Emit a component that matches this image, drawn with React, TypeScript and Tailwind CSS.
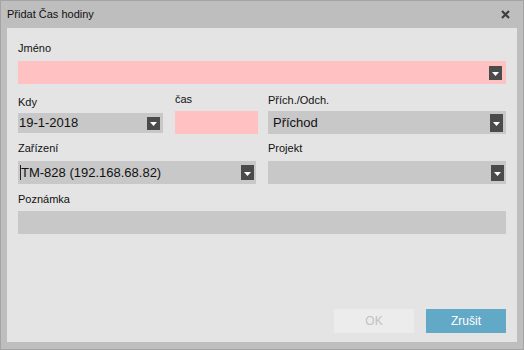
import React from 'react'

const font = { fontFamily: '"Liberation Sans", Arial, sans-serif' }

function Caret({ h = 'h-[13px]' }: { h?: string }) {
  return (
    <div className={`w-[13px] ${h} bg-[#4b4b4b] flex items-center justify-center shrink-0`}>
      <svg width="7" height="4" viewBox="0 0 7 4" className="mt-[2px]">
        <path d="M0 0H7L3.5 4Z" fill="#ffffff" />
      </svg>
    </div>
  )
}

function Label({ children, className = '' }: { children: React.ReactNode; className?: string }) {
  return <div className={`h-[14px] leading-[14px] text-[11px] text-[#111] ${className}`}>{children}</div>
}

export default function App() {
  return (
    <div style={font} className="w-[524px] h-[350px] bg-[#bebebe] border border-[#a4a4a4] flex flex-col">
      {/* title bar */}
      <div className="h-[27px] flex items-center justify-between pl-[6px] pr-[13px]">
        <span className="text-[11px] text-[#111]">Přidat Čas hodiny</span>
        <svg width="9" height="9" viewBox="0 0 9 9">
          <path d="M1 1L8 8M8 1L1 8" stroke="#3f3f3f" strokeWidth="2.2" />
        </svg>
      </div>

      <div className="mx-[6px] mb-[7px] flex-1 bg-[#e4e4e4] flex flex-col pl-[11px] pr-[11px] pt-[13px] pb-[9px]">
        {/* Jméno */}
        <Label>Jméno</Label>
        <div className="mt-[6px] h-[23px] bg-[#ffc1c1] flex items-center justify-end pr-[4px]">
          <Caret h="h-[14px]" />
        </div>

        {/* row 2 */}
        <div className="mt-[9px] flex gap-[12px]">
          <div className="w-[145px] flex flex-col">
            <Label className="pt-[2px] h-[16px]">Kdy</Label>
            <div className="mt-[4px] h-[20px] bg-[#c8c8c8] flex items-center justify-between pl-[1px] pr-[3px]">
              <span className="text-[13px] text-[#111]">19-1-2018</span>
              <Caret />
            </div>
          </div>
          <div className="w-[83px] flex flex-col">
            <Label className="-mt-[1px]">čas</Label>
            <div className="mt-[5px] h-[23px] bg-[#ffc1c1]" />
          </div>
          <div className="flex-1 flex flex-col ml-[-2px]">
            <Label>Přích./Odch.</Label>
            <div className="mt-[4px] h-[23px] bg-[#c8c8c8] flex items-center justify-between pl-[5px] pr-[3px]">
              <span className="text-[13px] text-[#111]">Příchod</span>
              <Caret h="h-[18px]" />
            </div>
          </div>
        </div>

        {/* row 3 */}
        <div className="mt-[7px] flex gap-[12px]">
          <div className="w-[238px] flex flex-col">
            <Label>Zařízení</Label>
            <div className="mt-[6px] h-[23px] bg-[#c8c8c8] flex items-center justify-between pl-[2px] pr-[2px]">
              <div className="flex items-center">
                <div className="w-px h-[15px] bg-[#222]" />
                <span className="text-[13px] text-[#111]">TM-828 (192.168.68.82)</span>
              </div>
              <Caret h="h-[15px]" />
            </div>
          </div>
          <div className="flex-1 flex flex-col">
            <Label>Projekt</Label>
            <div className="mt-[6px] h-[23px] bg-[#c8c8c8] flex items-center justify-end pr-[2px]">
              <Caret h="h-[16px]" />
            </div>
          </div>
        </div>

        {/* Poznámka */}
        <Label className="mt-[8px]">Poznámka</Label>
        <div className="mt-[5px] h-[23px] bg-[#c8c8c8]" />

        <div className="flex-1" />
        <div className="flex justify-end gap-[12px]">
          <div className="w-[80px] h-[24px] bg-[#ececec] flex items-center justify-center text-[12px] text-[#c2c2c2]">
            OK
          </div>
          <div className="w-[80px] h-[24px] bg-[#62a8c7] flex items-center justify-center text-[12px] text-white">
            Zrušit
          </div>
        </div>
      </div>
    </div>
  )
}
